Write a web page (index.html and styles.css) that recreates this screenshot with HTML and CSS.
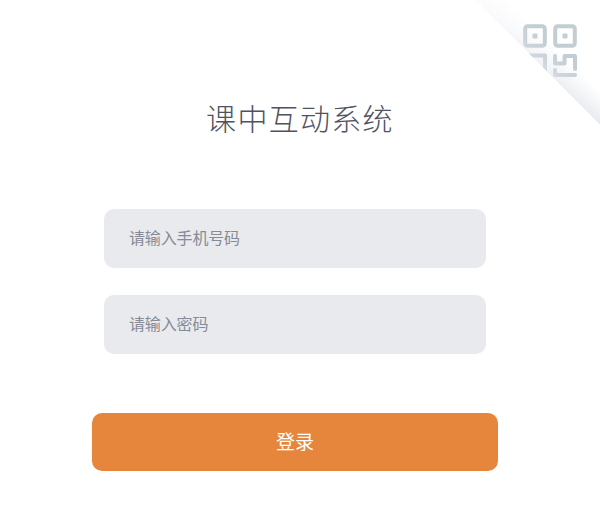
FILE: index.html
```html
<!DOCTYPE html>
<html lang="zh-CN">
<head>
<meta charset="utf-8">
<title>课中互动系统</title>
<link rel="stylesheet" href="styles.css">
</head>
<body>
<main class="page">
  <div class="corner">
    <svg class="qr" viewBox="0 0 54 53" width="54" height="53" fill="none" stroke="#c3ced4" stroke-width="4" stroke-linecap="round" stroke-linejoin="round">
      <rect x="2.2" y="2.2" width="19.6" height="19.6" rx="2.5"/>
      <rect x="32.2" y="2.2" width="19.6" height="19.6" rx="2.5"/>
      <rect x="10.5" y="10.5" width="3" height="3" fill="#c3ced4" stroke-width="2"/>
      <rect x="40.5" y="10.5" width="3" height="3" fill="#c3ced4" stroke-width="2"/>
      <path d="M2 31.5H22V50"/>
      <path d="M2 40H12V50"/>
      <path d="M32 32V39.5H41.5V32H52V45"/>
      <path d="M32 46V51H52"/>
    </svg>
    <div class="shade"></div>
    <div class="fold"></div>
  </div>
  <h1 class="title">课中互动系统</h1>
  <form class="form">
    <div class="fields">
      <input class="field" type="text" placeholder="请输入手机号码">
      <input class="field" type="password" placeholder="请输入密码">
    </div>
    <button class="submit" type="button">登录</button>
  </form>
</main>
</body>
</html>
```
FILE: styles.css
```css
* { box-sizing: border-box; }
html, body { margin: 0; padding: 0; background: #fff; }
body { font-family: "Noto Sans CJK SC", "Liberation Sans", sans-serif; }
.page { position: relative; width: 600px; height: 525px; overflow: hidden; background: #fff; }
.corner { position: absolute; top: 0; right: 0; width: 125px; height: 125px; }
.qr { position: absolute; top: 24px; left: 48px; filter: blur(.4px); }
.shade {
  position: absolute; inset: 0;
  background: linear-gradient(to top right, rgba(226,229,235,.85) 50%, rgba(255,255,255,0) 64%);
  -webkit-mask-image: linear-gradient(to bottom, rgba(0,0,0,.15), #000);
  mask-image: linear-gradient(to bottom, rgba(0,0,0,.15), #000);
}
.fold {
  position: absolute; inset: 0;
  background: linear-gradient(to top right, #fff 50%, rgba(255,255,255,0) 50.4%);
}
.title {
  margin: 0; padding-top: 95px; text-align: center;
  font-size: 30px; line-height: 44px; font-weight: 300; letter-spacing: 1.3px; color: #50535f;
}
.form { display: flex; flex-direction: column; align-items: center; width: 590px; padding-top: 70px; }
.fields { display: flex; flex-direction: column; gap: 27px; }
.field {
  display: block; width: 382px; height: 59px; padding: 0 25px 4px;
  border: 0; border-radius: 10px; outline: 0; background: #e9eaee;
  font: 16px "Noto Sans CJK SC", sans-serif; letter-spacing: -.15px; color: #50535f;
}
.field::placeholder { color: #858b97; opacity: 1; }
.submit {
  width: 406px; height: 58px; margin-top: 59px; padding: 0 0 4px;
  border: 0; border-radius: 10px; background: #e5863c; color: #fff;
  font: 19px "Noto Sans CJK SC", sans-serif;
}
```
